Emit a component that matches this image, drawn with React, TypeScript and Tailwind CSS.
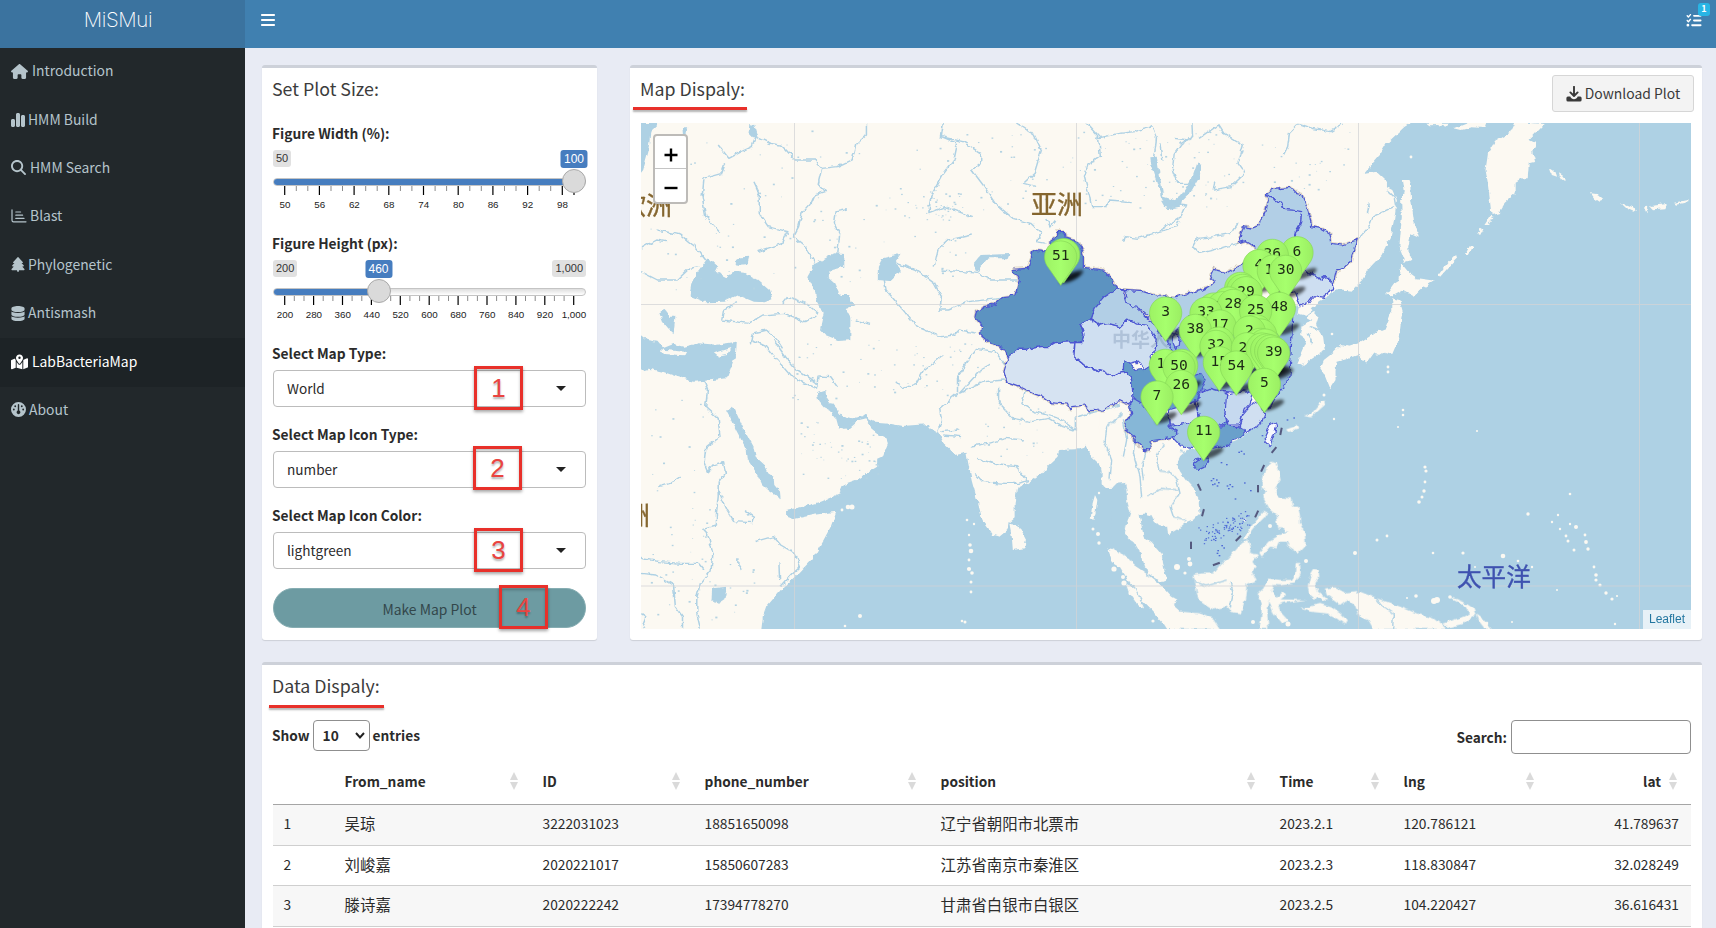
import React from "react";
import {
  FaBars,
  FaChartSimple,
  FaDatabase,
  FaGauge,
  FaHouse,
  FaListCheck,
  FaMagnifyingGlass,
  FaMapLocationDot,
  FaTree,
} from "react-icons/fa6";

/* ------------------------------------------------------------------ */
/* Map geometry                                                        */
/* ------------------------------------------------------------------ */

const NW = "translate(620 50) scale(.35714 .33333)";
const SW = "translate(620 340) scale(.35714 .33333)";
const NE = "translate(1160 0) scale(.35461 .33333)";
const CN = "translate(960 180) scale(.33333)";
const SEA = "translate(1080 400) scale(.33333)";

const OCEAN = "#aed1e4";
const LAND = "#fcf9f2";

const neLand =
  "M-170,340 L712,366 690,380 665,405 640,430 620,465 600,490 575,522 610,515 625,530 640,545 640,562 655,570 668,600 660,660 650,710 625,765 590,805 570,840 540,872 505,868 480,880 470,895 450,905 425,925 447,950 440,975 460,1010 465,1050 440,1068 400,1097 387,1090 400,1060 412,1030 395,1000 400,980 430,960 405,945 385,940 390,915 360,935 350,1000 320,1050 340,1100 350,1125 310,1210 290,1240 245,1300 -170,1300Z";

const seaLand = [
  "M65,30 L65,250 78,265 100,262 112,250 135,248 140,270 142,300 152,335 142,370 135,400 150,418 165,430 180,455 188,475 195,500 205,520 245,545 260,540 250,500 245,465 215,430 190,412 185,385 178,342 195,340 215,345 225,365 238,378 262,380 265,403 295,385 315,368 340,358 358,340 355,300 345,270 318,240 300,215 288,192 300,168 320,150 360,140 440,130 490,110 490,30Z",
  "M575,185 L590,190 596,210 602,240 585,265 590,285 600,292 635,295 640,320 655,320 660,350 660,370 675,400 677,435 655,458 628,440 620,425 600,425 590,445 570,440 545,470 538,458 565,425 600,405 622,398 610,385 595,385 590,345 570,330 560,310 550,290 558,272 545,262 545,250 555,210 565,195Z",
  "M492,418 L500,400 515,380 535,350 552,332 562,335 555,350 530,375 512,398 505,415Z",
  "M345,545 L340,525 365,520 400,520 420,495 445,475 485,430 505,420 512,440 510,458 537,465 520,485 530,500 515,515 530,540 500,552 495,600 482,640 452,636 440,620 400,628 370,610 355,600 350,575Z",
  "M83,450 L95,446 120,460 150,475 160,495 190,515 215,535 250,562 275,590 292,600 275,610 300,632 290,650 282,687 262,687 250,668 215,630 190,605 170,570 145,540 120,500 95,485Z",
  "M140,550 L165,570 192,625 175,615 150,580Z",
  "M45,285 L52,300 48,330 40,360 32,355 38,310Z",
  "M565,535 L600,540 635,540 648,520 650,490 660,488 662,520 645,550 600,556 580,555 572,575 590,590 612,575 618,585 602,598 680,600 610,608 595,615 605,640 628,665 605,672 580,640 568,600 562,640 565,687 538,687 545,640 542,610 530,585 550,565Z",
  "M690,530 L702,510 716,512 718,530 706,550 714,575 745,600 735,602 712,590 705,600 688,585 683,560Z",
  "M735,565 L765,562 800,580 840,575 890,595 920,605 960,620 1010,640 1060,655 1080,670 1100,687 880,687 865,660 838,650 825,620 800,600 780,615 760,600 740,585Z",
  "M665,625 L720,612 755,622 785,645 800,660 795,674 770,655 740,640 690,635Z",
  "M1085,672 L1150,650 1170,640 1160,620 1120,600 1110,590 1150,605 1180,625 1187,645 1150,672 1110,682Z",
  "M1190,640 L1210,655 1237,687 1215,687 1198,665Z",
  "M270,632 L360,640 400,655 420,687 280,687Z",
  "M618,88 L650,78 655,88 625,96Z",
  "M675,48 L695,40 720,10 735,2 738,12 712,35 695,52Z",
];

const neIslands = [
  "M1000,366 L985,400 945,425 925,460 918,510 924,545 928,580 935,645 955,640 975,605 1003,580 1003,545 1020,535 1037,535 1040,490 1058,485 1050,455 1060,430 1042,420 1060,400 1085,372Z",
  "M750,368 L815,368 805,380 785,375 760,376Z",
  "M830,385 L870,368 920,368 915,384 880,382 850,390Z",
  "M685,540 L700,540 706,560 708,600 716,660 730,710 708,700 700,740 702,768 712,775 692,785 675,740 682,650 680,600 690,575Z",
  "M680,790 L700,815 725,835 775,842 740,865 715,890 685,872 650,892 638,882 660,850 675,840 678,815Z",
  "M655,895 L675,900 685,940 680,985 668,1030 655,1062 635,1055 620,1065 600,1060 580,1090 560,1065 525,1078 498,1085 495,1110 495,1140 480,1165 465,1125 452,1105 462,1080 480,1065 510,1035 530,1040 560,1030 590,1010 610,995 635,985 655,930Z",
  "M915,675 L930,650 940,655 925,675Z",
  "M860,765 L875,735 882,740 868,765Z",
  "M785,825 L810,790 835,765 838,775 815,800 790,830Z",
  "M895,705 L905,680 912,685 900,708Z",
  "M1100,505 L1115,515 1120,530 1105,525Z",
  "M1125,520 L1143,532 1140,540 1128,532Z",
  "M1215,580 L1235,583 1250,597 1240,605 1225,595Z",
  "M1300,610 L1320,615 1345,628 1335,635 1315,625Z",
  "M1365,622 L1378,620 1372,640Z",
  "M1382,618 L1430,612 1425,625 1390,628Z",
  "M1450,608 L1490,600 1490,607 1455,614Z",
];

const nwWater = [
  "M50,219 L110,219 85,245 80,300 65,360 50,380Z",
  "M175,232 L188,232 186,265 176,255Z",
  "M362,222 L378,225 388,262 372,262 360,248Z",
  "M240,632 L250,625 275,650 268,665 298,682 322,665 350,668 385,690 420,722 427,748 405,757 375,755 330,735 290,755 240,757 195,737 200,700 215,668Z",
  "M320,635 L340,622 362,620 356,645 330,648Z",
  "M545,642 L575,625 600,610 628,612 628,650 592,660 580,680 600,700 615,735 642,735 645,755 660,765 632,775 645,800 645,868 610,870 575,855 560,838 570,790 552,760 545,720 525,680Z",
  "M735,625 L786,611 770,635 787,660 755,693 722,690 722,650Z",
  "M990,640 L1010,615 1090,612 1085,625 1030,625 1010,650 1000,668Z",
  "M110,785 L125,780 140,800 155,800 150,850 135,835 120,815Z",
  "M1485,322 L1503,320 1512,380 1522,440 1568,455 1568,470 1530,478 1515,440 1488,350Z",
];

const swWater = [
  "M50,-22 L75,0 105,5 120,25 150,12 180,20 220,10 270,14 327,5 325,40 310,85 300,115 240,122 205,125 160,110 120,95 80,86 50,96Z",
  "M300,215 L315,198 322,210 345,265 375,325 380,350 405,375 415,400 430,410 432,435 448,455 450,478 435,465 415,450 395,430 380,395 358,360 355,330 340,300 325,270 310,235Z",
  "M552,160 L575,152 580,175 600,200 620,225 650,235 680,228 692,218 695,238 715,248 760,252 790,258 865,252 870,265 892,278 905,308 940,345 970,338 975,370 985,420 1000,480 1015,540 1045,585 1062,590 1085,570 1088,550 1105,535 1105,490 1112,445 1140,430 1180,400 1200,375 1225,350 1230,330 1275,328 1307,317 1320,350 1345,375 1355,410 1352,440 1375,445 1375,875 395,875 400,830 410,800 450,750 500,700 540,655 570,600 590,560 605,515 540,525 485,538 465,530 465,510 500,503 560,485 615,460 620,435 660,420 690,400 720,380 720,358 735,350 750,310 745,295 720,280 700,262 690,235 670,240 640,268 612,262 605,235 590,215 570,205 555,185Z",
  "M258,745 L300,740 292,778 275,790 256,784Z",
];

const nwRivers =
  "M690,219 L690,255 660,285 650,330 610,350 565,355 545,330 490,330 465,300 450,285 420,280 380,260 370,235 M565,355 L555,400 575,425 545,435 535,460 510,490 500,530 485,560 520,590 545,640 M380,262 L370,290 340,305 305,325 275,285 M295,340 L285,370 235,385 230,440 240,500 280,548 M375,395 L390,430 390,490 415,530 470,545 455,580 385,605 M635,478 L605,485 600,520 615,550 610,610 M905,219 L900,260 945,280 935,330 900,380 870,440 865,488 910,470 985,500 M900,260 L960,275 1010,310 1010,340 985,360 1020,410 1050,460 1100,505 1150,520 1180,550 1165,575 1195,580 M1110,219 L1160,255 1180,300 1160,370 1130,400 1165,410 M1305,219 L1340,260 1345,320 1310,345 1300,380 1315,440 1320,470 1360,470 1370,450 1430,455 M1330,265 L1400,250 1440,245 1490,230 1502,260 1500,290 1490,340 M1410,575 L1415,560 1450,565 1510,545 1560,530 1568,510 M740,690 L745,720 800,790 830,830 900,860 935,855 950,840 1000,850 M775,640 L830,660 880,700 900,740 895,780 920,780 975,755 1070,745 M985,555 L920,570 890,600 880,650 M900,660 L960,665 1000,670 1040,690 1110,690 M59,595 L100,570 130,575 M105,540 L170,555 210,590 240,630 M59,665 L105,690 160,690 195,655 220,650 M330,755 L290,780 285,810 360,820 400,795 460,790 520,815 550,795 M455,760 L470,740 520,760 555,790 M365,880 L370,850 410,840 440,870 455,895 M660,810 L700,823 M1195,510 L1205,530 1220,510";
const swRivers =
  "M235,120 L245,150 240,200 275,235 280,290 240,325 235,370 245,395 260,375 290,365 295,400 275,430 275,470 270,520 270,555 235,565 250,600 260,640 255,690 225,730 215,770 215,820 225,866 M275,450 L300,510 320,545 370,548 375,530 350,512 M59,655 L110,665 170,670 220,670 235,690 M59,700 L100,705 150,735 155,800 175,830 175,866 M380,605 L430,590 450,615 490,640 505,680 480,705 450,740 M445,670 L447,720 M370,0 L410,20 440,60 480,110 530,135 550,145 555,108 590,110 610,140 M430,0 L470,60 490,85 550,130 M775,125 L795,145 830,130 850,90 905,45 M1080,75 L1050,35 1000,25 970,70 945,110 945,160 895,205 900,240 890,275 M1035,75 L1010,90 950,160 M1080,120 L1020,125 950,160 M1060,140 L1060,190 1100,235 1150,245 1200,235 1240,260 1270,270 M1135,150 L1125,190 1160,215 1230,235 1275,270 M1275,272 L1275,232 1400,195 M985,318 L1030,310 1080,295 1130,300 M1000,355 L1060,375 1110,380 1140,420 M995,400 L1015,425 1080,430 1120,430 1145,420 M900,275 L950,270 M905,285 L955,290 M110,440 L140,430 170,408 M330,655 L330,670 342,690 M59,820 L72,830 65,850 72,866";
const neRivers =
  "M390,370 L430,385 480,395 515,372 M390,372 L365,400 360,440 348,465 M90,370 L92,410 60,430 40,460 35,510 50,550 85,550 M110,415 L165,375 180,400 235,435 220,490 240,520 200,560 150,570 155,545 M0,690 L60,650 75,615 40,610 M220,670 L200,700 150,710 105,715 92,740 110,760 170,745 220,730 M560,715 L590,680 600,650 660,620 M640,570 L660,590 665,620 M0,430 L5,480 M40,415 L80,420 M590,610 L585,640 M440,925 L410,950 M425,980 L450,990 M415,1000 L430,1030";
const seaRivers =
  "M125,40 L105,60 80,80 75,130 95,180 90,240 M165,110 L160,160 180,230 185,290 M200,150 L185,200 190,240 M250,130 L230,170 240,210 270,215 290,240 300,280 270,320 280,350 320,360 M205,290 L240,265 300,270 M130,60 L140,120 130,170 M345,545 L380,558 440,540 M450,545 L460,580 450,625 M885,590 L910,620 940,640 938,687 M300,150 L340,175";

const provinces: { d: string; fill: string }[] = [
  { fill: "#8fb8dc", d: "M600,420 L700,400 1000,370 990,590 915,700 880,640 720,630 700,680 640,700 600,560Z" },
  {
    fill: "#b2cfe6",
    d: "M475,330 L505,332 550,335 590,348 650,350 720,332 745,320 762,305 752,285 760,268 800,278 850,250 875,225 900,222 885,200 860,185 835,190 850,140 875,145 900,135 905,110 918,92 925,60 915,45 940,30 938,55 965,70 972,88 1000,90 1025,95 1022,130 1010,150 1005,170 1020,200 1030,300 900,300 800,370 700,400 640,460 580,420 540,385 500,375 495,335Z",
  },
  {
    fill: "#b1cfe7",
    d: "M915,45 L940,28 990,22 1008,40 1025,45 1040,80 1050,110 1055,140 1085,145 1110,160 1115,190 1145,195 1195,178 1185,205 1175,240 1150,265 1130,270 1120,310 1095,290 1080,300 1065,285 1040,280 1010,250 1005,170 1022,130 1025,95 1000,90 972,88 965,70 938,55Z",
  },
  { fill: "#cddef1", d: "M1010,250 L1040,280 1065,285 1080,300 1095,290 1120,310 1124,328 1105,335 1095,355 1060,350 1045,370 1020,378 1008,340 990,330Z" },
  {
    fill: "#5b93c1",
    d: "M290,155 L312,155 315,170 340,178 358,190 370,225 370,262 430,270 445,288 458,295 470,325 435,350 420,375 405,385 395,418 360,430 372,465 365,488 345,485 285,488 265,500 240,500 200,508 170,508 145,530 132,508 90,490 62,465 65,435 45,412 48,395 75,380 100,375 130,350 165,345 178,300 160,268 205,265 220,210 250,215 270,208 270,185 290,170Z",
  },
  {
    fill: "#d6e3f2",
    d: "M145,530 L170,508 200,508 240,500 265,500 285,488 345,485 340,520 360,545 380,560 430,575 460,590 480,575 500,575 515,600 520,660 500,672 480,662 465,665 450,680 430,690 390,692 375,675 335,680 330,690 322,672 270,668 245,650 220,640 180,620 140,605 132,575Z",
  },
  {
    fill: "#cfdff1",
    d: "M360,430 L395,418 420,435 445,430 480,440 500,420 530,432 560,435 580,455 592,480 585,510 570,530 575,555 555,568 530,545 510,550 492,540 490,575 480,575 460,590 430,575 380,560 342,530 345,488 365,488 372,465Z",
  },
  { fill: "#b2cfe6", d: "M470,326 L488,335 500,375 530,378 545,400 570,420 620,480 640,520 600,560 585,510 592,480 560,435 530,432 500,420 480,440 445,430 420,435 395,418 405,385 435,350Z" },
  { fill: "#c6d9f0", d: "M640,460 L660,470 658,500 645,505 636,485Z" },
  { fill: "#629ac8", d: "M492,540 L510,550 530,570 555,568 575,555 600,560 640,590 720,580 735,600 700,680 640,700 600,670 560,690 545,670 520,660 515,600 500,575 490,572Z" },
  {
    fill: "#86b7d7",
    d: "M520,655 L545,670 560,690 600,690 625,710 628,740 655,755 648,770 600,778 575,782 568,810 550,808 535,795 525,775 495,750 500,725 515,700 508,672Z",
  },
  { fill: "#d3e0f0", d: "M625,690 L660,680 705,662 712,690 715,725 650,735 628,735Z" },
  { fill: "#a5c9e3", d: "M628,740 L720,722 770,740 772,780 745,800 700,803 665,798 640,772 655,755Z" },
  { fill: "#6aa0cb", d: "M765,742 L785,740 800,725 815,740 855,738 858,755 845,768 800,795 750,806 745,795 770,770Z" },
  { fill: "#a8cbe4", d: "M715,640 L750,625 775,632 800,640 805,670 795,700 800,728 780,738 760,728 720,728 712,690Z" },
  { fill: "#c6d9ef", d: "M800,645 L830,640 850,630 880,640 870,670 852,690 838,735 805,735 795,700Z" },
  { fill: "#d0dff1", d: "M880,665 L900,675 915,700 905,730 885,740 858,758 840,730 850,700Z" },
  { fill: "#78a9d3", d: "M700,850 L715,838 740,832 746,845 732,862 712,871 702,862Z" },
  { fill: "#f6f8fe", d: "M915,768 L930,735 946,725 950,740 942,765 930,797 918,785Z" },
];

type Pin = [x: number, y: number, label: string];
const pins: Pin[] = [
  [311, 217, ""], [302, 224, "51"], [1011, 211, "6"], [937, 219, "36"], [897, 250, "4"],
  [940, 266, "12"], [977, 267, "30"], [842, 318, "2"], [848, 324, ""], [858, 331, "29"],
  [806, 362, ""], [762, 380, ""], [788, 376, "14"], [820, 369, "28"], [958, 378, "48"],
  [887, 386, "25"], [738, 393, "33"], [617, 392, "3"], [780, 431, "17"], [706, 444, "38"],
  [888, 445, ""], [902, 458, ""], [868, 449, "2"], [776, 482, ""], [768, 492, "32"],
  [900, 486, ""], [915, 488, ""], [862, 499, "21"], [906, 500, ""], [920, 503, ""], [932, 506, ""], [941, 512, "39"],
  [778, 541, "15"], [616, 549, "19"], [665, 549, ""], [657, 554, "50"], [829, 554, "54"],
  [913, 606, "5"], [664, 612, "26"], [591, 644, "7"], [731, 750, "11"],
];

const islets: [number, number, number][] = [
  // Pacific
  [1355, 553, 2], [1377, 540, 1.5], [1387, 536, 1.4], [1433, 553, 1.3], [1463, 553, 1.6], [1475, 567, 1],
  [1503, 556, 2.3], [1518, 561, 1.3], [1532, 567, 1.2], [1528, 514, 1.7], [1558, 515, 1.2], [1552, 522, 1.2],
  [1570, 524, 1.2], [1576, 527, 2], [1560, 529, 1.2], [1566, 536, 1.4], [1568, 541, 1.5], [1585, 535, 1.4],
  [1586, 542, 1.9], [1588, 549, 1.7], [1574, 550, 1.5], [1594, 567, 1.4], [1596, 575, 1.8], [1596, 580, 1.6],
  [1600, 585, 1.6], [1606, 593, 1.7], [1612, 599, 1.6], [1617, 596, 1.1], [1570, 494, 1.3], [1557, 590, 1],
  [1425, 467, 1.6], [1426, 471, 1.6], [1425, 482, 1.4], [1424, 491, 1.7], [1422, 497, 1.5], [1419, 502, 1.8],
  [1403, 410, 1.3], [1403, 415, 1.3], [1398, 427, 1.1], [1477, 431, 1.1], [1334, 419, 1.2], [1411, 157, 1.4],
  [1388, 367, 1.4], [1388, 372, 1.4], [1324, 395, 1.5], [1332, 334, 1.3], [1434, 601, 3], [1437, 600, 3],
  [1450, 597, 1.8], [1416, 596, 1.8], [1407, 598, 1], [1512, 622, 1], [1615, 624, 1.2],
  // Indian Ocean
  [967, 520, 1.3], [974, 524, 1.2], [969, 535, 1.2], [970, 545, 1.8], [971, 551, 2.3], [969, 560, 1.4],
  [969, 569, 2.1], [972, 573, 1.8], [971, 582, 1.5], [971, 592, 1.4], [860, 616, 2], [845, 626, 1.3],
  [962, 621, 1.3], [965, 622, 1.5], [842, 510, 1.4], [848, 507, 2.3], [852, 507, 2.5], [1099, 493, 1.2],
  [1093, 529, 1.5], [1098, 534, 2], [1099, 543, 1.7], [1114, 569, 2.6], [1123, 577, 2], [1124, 583, 2.6],
  [1177, 567, 3], [1189, 559, 2], [1190, 564, 2.4], [1212, 576, 1.5], [1153, 621, 1.6], [1306, 561, 2],
  [1245, 520, 1.5], [1270, 526, 2], [1253, 622, 2], [1288, 624, 2.5], [1185, 573, 1.6],
];

const reefs = Array.from({ length: 86 }, (_, i) => {
  const t = i / 86;
  const a = Math.sin(i * 12.9898) * 43758.5453;
  const r = a - Math.floor(a);
  const b = Math.sin(i * 78.233) * 12543.123;
  const s = b - Math.floor(b);
  return [370 + t * 140 + (r - 0.5) * 30, 408 - t * 50 + (s - 0.5) * 52] as [number, number];
});

const ponds = (() => {
  const boxes = [
    [650, 130, 330, 160, 90], [980, 130, 260, 80, 90], [1240, 130, 110, 60, 25],
    [790, 340, 190, 60, 60], [800, 420, 80, 60, 55], [650, 390, 60, 200, 34],
    [650, 560, 120, 60, 26], [900, 190, 60, 30, 40], [985, 400, 60, 60, 22],
  ];
  let seed = 7;
  const rnd = () => (seed = (seed * 16807) % 2147483647) / 2147483647;
  return boxes.flatMap(([x, y, w, h, n]) =>
    Array.from({ length: n }, () => [x + rnd() * w, y + rnd() * h, 0.5 + rnd() * 1.3]),
  );
})();

const dashes = [
  [358, 262, -25], [369, 338, 15], [333, 436, 0], [409, 492, 70], [475, 415, 45],
  [530, 342, 25], [534, 266, 0], [548, 205, 25], [582, 150, 40], [603, 94, 12],
];

const pinPath = "M0,0 L-13.6,-19.5 C-20.6,-31.5 -12,-44.4 0,-44.4 C12,-44.4 20.6,-31.5 13.6,-19.5 Z";

function WorldMap() {
  const river = { fill: "none", stroke: OCEAN, strokeWidth: 4.2, strokeLinejoin: "round" as const };
  return (
    <svg viewBox="641 123 1050 506" className="block h-[506px] w-[1050px]" aria-hidden="true">
      <defs>
        <filter id="rough" x="0" y="0" width="100%" height="100%">
          <feTurbulence type="fractalNoise" baseFrequency="0.16" numOctaves="2" seed="4" />
          <feDisplacementMap in="SourceGraphic" scale="5" xChannelSelector="R" yChannelSelector="G" />
        </filter>
        <filter id="roughLine" x="-5%" y="-5%" width="110%" height="110%">
          <feTurbulence type="fractalNoise" baseFrequency="0.16" numOctaves="2" seed="9" />
          <feDisplacementMap in="SourceGraphic" scale="6" xChannelSelector="R" yChannelSelector="G" />
        </filter>
        <filter id="soft" x="-20%" y="-20%" width="140%" height="140%">
          <feGaussianBlur stdDeviation="5" />
        </filter>
        <linearGradient id="pin" x1="0" x2="1">
          <stop offset="0" stopColor="#9df264" />
          <stop offset=".5" stopColor="#a6ff6d" />
          <stop offset="1" stopColor="#9bee63" />
        </linearGradient>
      </defs>
      <rect x="641" y="123" width="1050" height="506" fill={OCEAN} />
      <g filter="url(#rough)">
        <rect x="600" y="100" width="503" height="560" fill={LAND} />
        <g fill={LAND}>
          <path transform={NE} d={neLand} />
          <g transform={NE}>{neIslands.map((d) => <path key={d} d={d} />)}</g>
          <g transform={SEA}>{seaLand.map((d) => <path key={d} d={d} />)}</g>
        </g>
        <g fill={OCEAN}>
          <g transform={NW}>{nwWater.map((d) => <path key={d} d={d} />)}</g>
          <g transform={SW}>{swWater.map((d) => <path key={d} d={d} />)}</g>
          <path transform={NE} d="M105,490 L118,495 112,530 85,580 45,622 12,622 0,600 25,615 60,585 92,530Z" />
        </g>
        <g fill={LAND}>
          <path transform={SEA} d={seaLand[0]} />
          <path transform={SEA} d={seaLand[4]} />
          <path transform={SEA} d={seaLand[5]} />
          <path transform={SEA} d={seaLand[6]} />
          <path transform={SW} d="M1090,552 L1115,555 1137,600 1132,625 1100,630 1097,590Z" />
          <path transform={SW} d="M110,28 L185,36 180,46 120,42Z M263,40 L300,28 312,24 300,45 275,50Z" />
        </g>
        <path transform={NW} d={nwRivers} {...river} />
        <path transform={SW} d={swRivers} {...river} />
        <path transform={NE} d={neRivers} {...river} />
        <path transform={SEA} d={seaRivers} {...river} />
      </g>
      {ponds.map(([x, y, s], i) => (
        <rect key={i} x={x} y={y} width={s + 0.4} height={s} fill="#b4d3e2" />
      ))}
      <g fill={LAND}>
        {islets.map(([x, y, r], i) => (
          <circle key={i} cx={x} cy={y} r={r} />
        ))}
      </g>
      <g stroke="#d3d3d6" strokeWidth="1" opacity=".75">
        <path d="M794.5,123V629 M1076.5,123V629 M1358.5,123V629 M1639.5,123V629 M641,304.5H1691 M641,586H1691" />
      </g>

      <g className="font-['Noto_Sans_CJK_SC',sans-serif]" strokeWidth=".35">
        <text x="1031" y="214" fontSize="26" fontWeight="400" fill="#85662f" stroke="#85662f">亚洲</text>
        <text x="620" y="215" fontSize="26" fontWeight="400" fill="#85662f" stroke="#85662f">欧洲</text>
        <text x="598" y="525" fontSize="26" fontWeight="400" fill="#85662f" stroke="#85662f">非洲</text>
        <text x="1457" y="586" fontSize="24.6" fontWeight="400" fill="#3f52b0" stroke="#3f52b0">太平洋</text>
      </g>

      <g filter="url(#roughLine)">
        <g transform={CN} stroke="#c9bda3" strokeWidth="9" strokeLinejoin="round" opacity=".55" fill="none">
          {[1, 2, 4, 5, 10].map((i) => <path key={i} d={provinces[i].d} />)}
        </g>
        <g transform={CN} stroke="#4b54d2" strokeWidth="3.6" strokeLinejoin="round">
          {provinces.map((p) => <path key={p.d} d={p.d} fill={p.fill} />)}
        </g>
      </g>
      <g className="font-['Noto_Sans_CJK_SC',sans-serif]" opacity=".32">
        <text x="1112" y="347" fontSize="19" fontWeight="700" fill="#6f86a8">中华人</text>
      </g>

      <g transform={SEA} fill="#4f6bd6">
        {reefs.map(([x, y], i) => <rect key={i} x={x} y={y} width="4" height="3.4" />)}
        {[[392, 240], [398, 234], [408, 238], [414, 246], [402, 250], [396, 252], [410, 256], [440, 256], [448, 252], [455, 258], [444, 264], [475, 155], [482, 152], [490, 160], [422, 186], [438, 192], [492, 247], [464, 295], [510, 270], [412, 450], [410, 458], [416, 465], [430, 442], [424, 435], [620, 58], [640, 52], [545, 105]].map(([x, y], i) => (
          <rect key={i} x={x} y={y} width="5" height="4" />
        ))}
      </g>
      <g transform={SEA} stroke="#55597f" strokeWidth="6">
        {dashes.map(([x, y, a], i) => (
          <path key={i} d="M0,-11V11" transform={`translate(${x} ${y}) rotate(${a})`} />
        ))}
      </g>

      <g transform={CN} filter="url(#soft)" fill="#000">
        {pins.map(([x, y], i) => (
          <ellipse key={i} cx="34" cy="-8" rx="34" ry="11" opacity=".6" transform={`translate(${x} ${y + 91}) rotate(-24)`} />
        ))}
      </g>
      {pins.map(([x, y, label], i) => (
        <g key={i} transform={`translate(${960 + x / 3} ${180 + (y + 92) / 3})`}>
          <path d={pinPath} fill="url(#pin)" stroke="#86d958" strokeWidth=".7" />
          {label && (
            <text y="-25.3" textAnchor="middle" fontSize="14.6" fill="#1d2a16" className="font-['DejaVu_Sans_Mono',monospace]">
              {label}
            </text>
          )}
        </g>
      ))}
    </svg>
  );
}

/* ------------------------------------------------------------------ */
/* Small pieces                                                        */
/* ------------------------------------------------------------------ */

function BarsIcon() {
  return (
    <svg viewBox="0 0 16 14" className="h-[14px] w-4" fill="none" stroke="currentColor" strokeLinecap="round">
      <path d="M1 .8V11.2Q1 12.8 2.6 12.8H15" strokeWidth="1.2" />
      <path d="M4.8 3H9.6M4.8 6.2H11.6M4.8 9.4H13" strokeWidth="1.2" />
    </svg>
  );
}

function DownloadIcon() {
  return (
    <svg viewBox="0 0 16 16" className="h-4 w-4" fill="none" stroke="currentColor">
      <path d="M8 .8V9.6M4.4 6.4L8 10L11.6 6.4" strokeWidth="1.9" strokeLinecap="round" strokeLinejoin="round" />
      <path d="M1.9 10.6H4.3C5 12.6 6.4 13.2 8 13.2S11 12.6 11.7 10.6H14.1Q15.6 10.6 15.6 12.1V14Q15.6 15.6 14 15.6H2Q.4 15.6 .4 14V12.1Q.4 10.6 1.9 10.6Z" fill="currentColor" stroke="none" />
    </svg>
  );
}

const menu = [
  { label: "Introduction", icon: <FaHouse className="h-[15px] w-[17px]" />, gap: "gap-1" },
  { label: "HMM Build", icon: <FaChartSimple className="h-[16px] w-[14px]" />, gap: "gap-[3px]" },
  { label: "HMM Search", icon: <FaMagnifyingGlass className="h-[15px] w-[15px]" />, gap: "gap-1" },
  { label: "Blast", icon: <BarsIcon />, gap: "gap-[3px]" },
  { label: "Phylogenetic", icon: <FaTree className="h-[15px] w-[14px]" />, gap: "gap-[3px]" },
  { label: "Antismash", icon: <FaDatabase className="h-[15px] w-[14px]" />, gap: "gap-[3px]" },
  { label: "LabBacteriaMap", icon: <FaMapLocationDot className="h-[16px] w-[17px]" />, gap: "gap-1", active: true },
  { label: "About", icon: <FaGauge className="h-[15px] w-[15px]" />, gap: "gap-[3px]" },
];

function Callout({ n, className }: { n: number; className: string }) {
  return (
    <span
      className={`absolute flex h-[44px] w-[49px] items-center justify-center border-[3px] border-[#e8302a] font-['Liberation_Sans',sans-serif] text-[26px] leading-none text-[#ea4440] shadow-[0_2px_3px_rgba(0,0,0,0.35),inset_0_2px_3px_rgba(0,0,0,0.25)] [text-shadow:0_2px_2px_rgba(0,0,0,0.3)] ${className}`}
    >
      {n}
    </span>
  );
}

function Select({ label, value, n, pos, className }: { label: string; value: string; n: number; pos: string; className: string }) {
  return (
    <div className={className}>
      <div className="-ml-px h-5 text-[13.75px] font-bold leading-[18px]">{label}</div>
      <div className="relative mt-[6px] flex h-[37px] items-center justify-between rounded-[4px] border border-[#bcbcbc] pl-[13px] pr-[19px] text-[13.6px]">
        <span>{value}</span>
        <span className="h-0 w-0 border-x-[5px] border-t-[5px] border-x-transparent border-t-[#222]" />
        <Callout n={n} className={pos} />
      </div>
    </div>
  );
}

interface SliderProps {
  label: string;
  min: string;
  max?: string;
  value: string;
  handle: number;
  labels: string[];
  labelsWidth: string;
  major: number[];
  minor: number[];
}

function Slider({ label, min, max, value, handle, labels, labelsWidth, major, minor }: SliderProps) {
  return (
    <div className="h-[110px]">
      <div className="-ml-px h-5 text-[13.75px] font-bold leading-[18px]">{label}</div>
      <div className="relative mt-[6px] h-[64px] w-[313px] font-['Liberation_Sans',sans-serif]">
        <div className="flex justify-between text-[11px] leading-[17px] text-[#333]">
          <span className="rounded-[3px] bg-[#e1e1e1] px-[3px]">{min}</span>
          {max && <span className="rounded-[3px] bg-[#e1e1e1] px-[3px]">{max}</span>}
        </div>
        <div className="mt-[11px] h-2 overflow-hidden rounded-full border border-[#c4c4c4] bg-gradient-to-b from-[#dedede] to-white">
          <div className="-mt-px h-2 bg-[#467dbf]" style={{ width: handle }} />
        </div>
        <svg viewBox="0 0 313 10" className="block h-[10px] w-[313px]">
          {minor.map((x) => <path key={x} d={`M${x},0V5`} stroke="#8b8b8b" strokeWidth="1" />)}
          {major.map((x) => <path key={x} d={`M${x},0V9`} stroke="#000" strokeWidth="1.2" />)}
        </svg>
        <div className={`ml-[12px] mt-[3px] flex justify-between text-[9.8px] leading-[12px] text-[#222] ${labelsWidth}`}>
          {labels.map((l) => (
            <span key={l} className="flex w-0 justify-center">{l}</span>
          ))}
        </div>
        <span
          className="absolute top-0 -translate-x-1/2 rounded-[3px] bg-[#467dbf] px-[3.5px] text-[12px] leading-[18px] text-white"
          style={{ left: handle }}
        >
          {value}
        </span>
        <span
          className="absolute top-[19px] h-6 w-6 -translate-x-1/2 rounded-full border border-[#a9a9a9] bg-[#dadada]"
          style={{ left: handle }}
        />
      </div>
    </div>
  );
}

const widthMajor = Array.from({ length: 9 }, (_, i) => 11.7 + i * 34.7).concat(301);
const widthMinor = Array.from({ length: 8 }, (_, i) => [11.7 + i * 34.7 + 11.6, 11.7 + i * 34.7 + 23.1]).flat();
const heightMajor = Array.from({ length: 11 }, (_, i) => 11.7 + i * 28.9);
const heightMinor = Array.from({ length: 10 }, (_, i) => [11.7 + i * 28.9 + 9.6, 11.7 + i * 28.9 + 19.3]).flat();

function SortIcon() {
  return (
    <svg viewBox="0 0 8 18" className="h-[18px] w-2 fill-[#dadada]">
      <path d="M4 0L8 8H0Z M0 10H8L4 18Z" />
    </svg>
  );
}

const columns = [
  { name: "", width: "w-[61px]" },
  { name: "From_name", width: "w-[198px]" },
  { name: "ID", width: "w-[162px]" },
  { name: "phone_number", width: "w-[236px]" },
  { name: "position", width: "w-[339px]" },
  { name: "Time", width: "w-[124px]" },
  { name: "lng", width: "w-[155px]" },
  { name: "lat", width: "w-[143px]" },
];

const rows = [
  ["1", "吴琼", "3222031023", "18851650098", "辽宁省朝阳市北票市", "2023.2.1", "120.786121", "41.789637"],
  ["2", "刘峻嘉", "2020221017", "15850607283", "江苏省南京市秦淮区", "2023.2.3", "118.830847", "32.028249"],
  ["3", "滕诗嘉", "2020222242", "17394778270", "甘肃省白银市白银区", "2023.2.5", "104.220427", "36.616431"],
];

const card = "rounded-[3px] border-t-[3px] border-[#cdd1d9] bg-white px-[11px] shadow-[0_1px_1px_rgba(0,0,0,0.12)]";

export default function App() {
  return (
    <div className="flex h-[928px] w-[1716px] flex-col overflow-hidden bg-[#e8ebf4] font-['Noto_Sans_CJK_SC',sans-serif] text-[#2b2b2b]">
      <header className="flex h-12 shrink-0 text-white">
        <div className="flex w-[245px] items-center justify-center bg-[#3b739f] pb-[8px] pr-[9px] font-['Inter',sans-serif] text-[20.5px] font-extralight tracking-[-0.4px]">
          MiSMui
        </div>
        <div className="flex flex-1 items-center justify-between bg-[#4080b0] pb-[8px] pl-4 pr-[14px]">
          <FaBars className="h-[16px] w-[14px]" />
          <div className="relative">
            <FaListCheck className="h-[15px] w-[16px]" />
            <span className="absolute -right-[8px] -top-[10px] h-[13px] w-[12px] rounded-[3px] bg-[#28b5e5] text-center text-[9px] font-bold leading-[12px]">
              1
            </span>
          </div>
        </div>
      </header>

      <div className="flex flex-1">
        <nav className="w-[245px] shrink-0 bg-[#22282b]">
          {menu.map((m) => (
            <a
              key={m.label}
              className={`flex h-[48.4px] items-center pb-[2px] pl-[11px] text-[13.9px] leading-none ${m.gap} ${
                m.active ? "bg-[#1d2326] text-white" : "text-[#b5c4cb]"
              }`}
            >
              {m.icon}
              <span>{m.label}</span>
            </a>
          ))}
        </nav>

        <main className="flex min-w-0 flex-1 flex-col gap-[22px] pl-[17px] pr-[14px] pt-[17px]">
          <div className="flex justify-between">
            <section className={`${card} h-[575px] w-[335px]`}>
              <h3 className="-ml-px mt-[8px] h-[25px] text-[17.8px] leading-6 text-[#3c3c3c]">Set Plot Size:</h3>
              <div className="mt-[23px]">
                <Slider
                  label="Figure Width (%):"
                  min="50"
                  value="100"
                  handle={301}
                  labels={["50", "56", "62", "68", "74", "80", "86", "92", "98"]}
                  labelsWidth="w-[277.5px]"
                  major={widthMajor}
                  minor={widthMinor}
                />
                <Slider
                  label="Figure Height (px):"
                  min="200"
                  max="1,000"
                  value="460"
                  handle={105.5}
                  labels={["200", "280", "360", "440", "520", "600", "680", "760", "840", "920", "1,000"]}
                  labelsWidth="w-[289px]"
                  major={heightMajor}
                  minor={heightMinor}
                />
              </div>
              <Select className="h-[81px]" label="Select Map Type:" value="World" n={1} pos="left-[200px] -top-[5px]" />
              <Select className="h-[81px]" label="Select Map Icon Type:" value="number" n={2} pos="left-[199px] -top-[6px]" />
              <Select className="h-[82px]" label="Select Map Icon Color:" value="lightgreen" n={3} pos="left-[200px] -top-[5px]" />
              <button className="relative flex h-[40px] w-[313px] items-center justify-center rounded-full border border-[#86adb2] bg-[#6d9ba2] text-[13.9px] text-[#33474b]">
                <span className="pt-[3px]">Make Map Plot</span>
                <Callout n={4} className="-top-[4px] left-[225px]" />
              </button>
            </section>

            <section className={`${card} h-[575px] w-[1072px]`}>
              <div className="flex h-[55px] items-start justify-between">
                <div className="relative mt-[8px]">
                  <h3 className="-ml-px h-6 text-[17.8px] leading-6 text-[#3c3c3c]">Map Dispaly:</h3>
                  <span className="absolute -left-2 top-[31px] h-[3px] w-[114px] bg-[#e8302a] shadow-[0_2px_2px_rgba(0,0,0,0.3)]" />
                </div>
                <button className="-mr-[3px] mt-[7px] flex h-[37px] w-[142px] items-center justify-center gap-[3px] rounded-[3px] border border-[#d6d6d6] bg-[#f3f3f3] text-[13.9px] text-[#3a3a3a]">
                  <DownloadIcon />
                  Download Plot
                </button>
              </div>
              <div className="relative h-[506px] w-[1050px] overflow-hidden">
                <WorldMap />
                <div className="absolute left-[12px] top-[11px] flex h-[70px] w-[35px] flex-col rounded-[4px] border-2 border-[#bdbbb8] bg-white">
                  <span className="flex h-[33px] items-center justify-center border-b border-[#c4c4c4] pt-[5px]">
                    <svg viewBox="0 0 14 14" className="h-[14px] w-[14px]" stroke="#000" strokeWidth="2.4"><path d="M7 .5V13.5M.5 7H13.5" /></svg>
                  </span>
                  <span className="flex h-[33px] items-center justify-center pt-[4px]">
                    <svg viewBox="0 0 14 14" className="h-[14px] w-[14px]" stroke="#000" strokeWidth="2.4"><path d="M.5 7H13.5" /></svg>
                  </span>
                </div>
                <span className="absolute bottom-0 right-0 h-[19px] w-[48px] bg-white/70 text-center font-['Liberation_Sans',sans-serif] text-[12px] leading-[18px] text-[#2376a0]">
                  Leaflet
                </span>
              </div>
            </section>
          </div>

          <section className={`${card} h-[300px]`}>
            <div className="relative mt-[8px] h-[25px] w-[120px]">
              <h3 className="-ml-px h-6 text-[17.8px] leading-6 text-[#3c3c3c]">Data Dispaly:</h3>
              <span className="absolute -left-1 top-[32px] h-[3px] w-[115px] bg-[#e8302a] shadow-[0_2px_2px_rgba(0,0,0,0.3)]" />
            </div>
            <div className="mt-[22px] flex h-[34px] justify-between text-[13.7px] font-bold">
              <div className="-ml-px flex h-[31px] items-center gap-[3px]">
                Show
                <span className="flex h-[31px] w-[57px] items-center justify-between rounded-[4px] border border-[#8f8f8f] pl-[9px] pr-[4px]">
                  10
                  <svg viewBox="0 0 10 7" className="h-[7px] w-[10px]" fill="none" stroke="#222" strokeWidth="2"><path d="M1 1L5 5.4L9 1" /></svg>
                </span>
                entries
              </div>
              <div className="flex items-center gap-1">
                <span>Search:</span>
                <span className="h-[34px] w-[180px] rounded-[4px] border border-[#8f8f8f]" />
              </div>
            </div>
            <div className="mt-[5px] flex h-[46px] items-center border-b border-[#a5a5a5] text-[13.7px] font-bold">
              {columns.map((c, i) => (
                <div key={i} className={`flex items-center pl-[10.6px] pr-[14px] ${i === 7 ? "justify-end gap-2" : "justify-between"} ${c.width}`}>
                  <span>{c.name}</span>
                  {c.name && <SortIcon />}
                </div>
              ))}
            </div>
            {rows.map((r, ri) => (
              <div key={r[0]} className={`flex h-[40.5px] items-center border-b border-[#cfcfcf] pb-[2px] text-[13.75px] ${ri % 2 ? "bg-white" : "bg-[#f7f7f7]"}`}>
                {r.map((v, i) => (
                  <div key={i} className={`${i === 7 ? "pr-[12px] text-right" : "pl-[10.6px]"} ${i === 1 || i === 4 ? "text-[15.4px]" : ""} ${columns[i].width}`}>
                    {v}
                  </div>
                ))}
              </div>
            ))}
          </section>
        </main>
      </div>
    </div>
  );
}
